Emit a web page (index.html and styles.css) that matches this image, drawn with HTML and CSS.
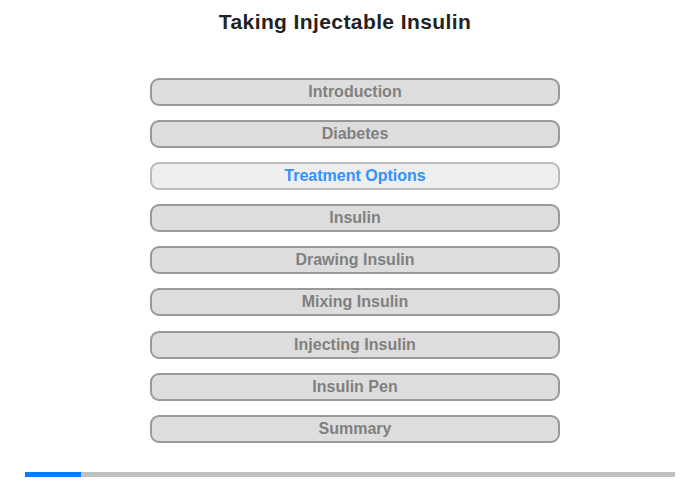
FILE: index.html
```html
<!DOCTYPE html>
<html>
<head>
<meta charset="utf-8">
<link rel="stylesheet" href="styles.css">
</head>
<body>
<div class="page">
  <h1 class="title">Taking Injectable Insulin</h1>
  <nav class="menu">
    <div class="item">Introduction</div>
    <div class="item">Diabetes</div>
    <div class="item active">Treatment Options</div>
    <div class="item">Insulin</div>
    <div class="item">Drawing Insulin</div>
    <div class="item">Mixing Insulin</div>
    <div class="item">Injecting Insulin</div>
    <div class="item">Insulin Pen</div>
    <div class="item">Summary</div>
  </nav>
  <div class="progress"><div class="bar" style="width:56px"></div></div>
</div>
</body>
</html>
```
FILE: styles.css
```css
html, body {
  margin: 0;
  padding: 0;
  background: #fff;
}
.page {
  width: 700px;
  height: 480px;
  font-family: "Liberation Sans", Arial, sans-serif;
  display: flex;
  flex-direction: column;
}
.title {
  margin: 10px 10px 0 0;
  font-size: 21px;
  letter-spacing: 0.4px;
  line-height: 24px;
  font-weight: bold;
  color: #222;
  text-align: center;
}
.menu {
  margin: 44px 0 0 150px;
  width: 410px;
  display: flex;
  flex-direction: column;
  gap: 14.1px;
}
.item {
  box-sizing: border-box;
  height: 28px;
  border: 2px solid #999;
  border-radius: 9px;
  background: #ddd;
  color: #808080;
  font-size: 16px;
  font-weight: bold;
  line-height: 24px;
  text-align: center;
}
.item.active {
  background: #eee;
  border-color: #bbb;
  color: #3390ff;
}
.progress {
  margin: 29px 0 0 25px;
  width: 650px;
  height: 5px;
  background: #c0c0c0;
}
.bar {
  height: 5px;
  background: #0080ff;
}
```
